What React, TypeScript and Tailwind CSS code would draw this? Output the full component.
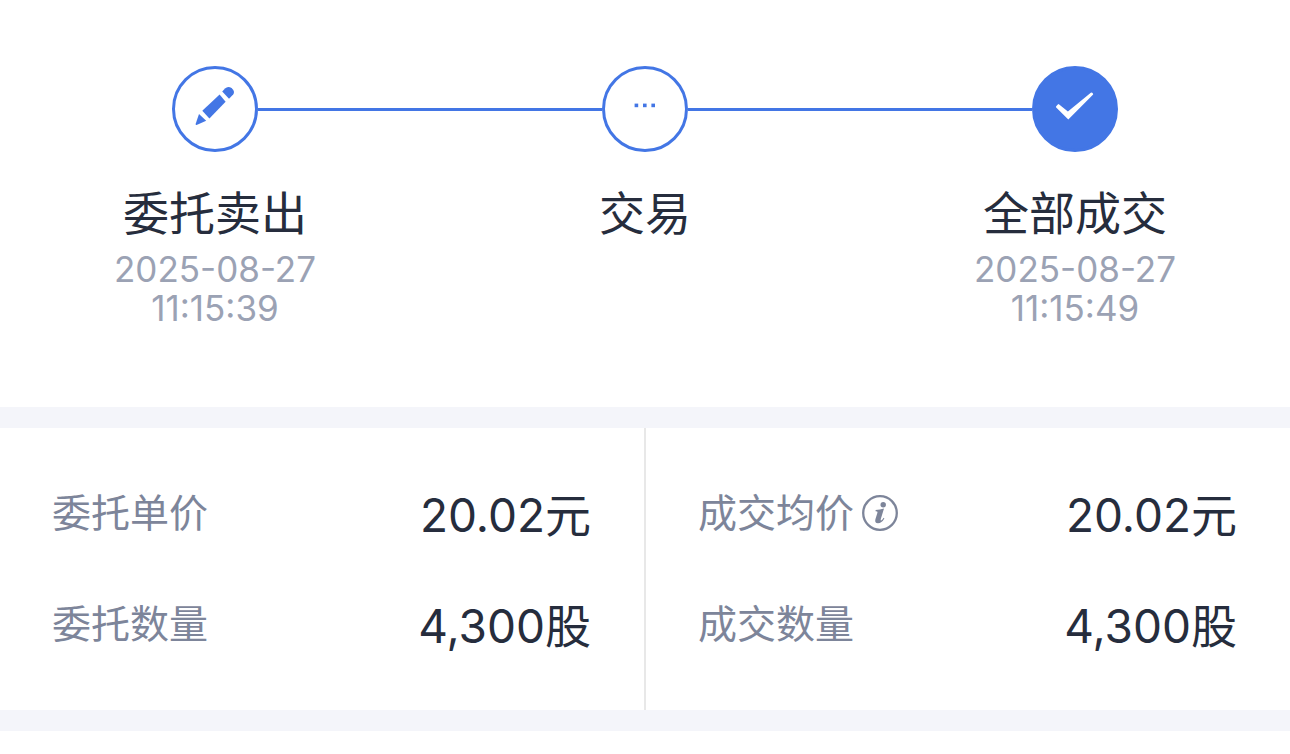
import type { ReactNode } from "react"

type Step = {
  title: string
  date?: string
  time?: string
  icon: ReactNode
}

const PencilIcon = () => (
  <svg viewBox="0 0 86 86" className="w-[86px] h-[86px] shrink-0" fill="currentColor" aria-hidden="true">
    <path d="M27 48 L34.2 54.8 L24.6 59 Q23.4 59.2 23.7 57.8 Z" />
    <path d="M30.3 44.8 L47.6 28.6 L53.6 35.8 L37.4 52.4 Z" />
    <path d="M50.2 25.6 L53 22.4 Q56 19.6 59.6 22 Q63.4 25.4 61.2 28.6 L57 32.8 Z" />
  </svg>
)

const DotsIcon = () => (
  <svg viewBox="0 0 86 86" className="w-[86px] h-[86px] shrink-0" fill="currentColor" aria-hidden="true">
    <rect x="32.6" y="37.6" width="3.6" height="3.6" />
    <rect x="41" y="37.6" width="3.6" height="3.6" />
    <rect x="49.4" y="37.6" width="3.6" height="3.6" />
  </svg>
)

const CheckIcon = () => (
  <svg viewBox="0 0 86 86" className="w-[86px] h-[86px] shrink-0" fill="currentColor" aria-hidden="true">
    <path d="M24.2 41.6 Q23.6 40.8 24.2 40.2 L25.8 38.4 Q26.5 37.8 27.2 38.4 L35.9 45.4 L58.8 26.8 Q59.5 26.2 60.2 26.8 L60.9 27.4 Q61.5 28.1 60.9 28.8 L36.3 53.4 Z" />
  </svg>
)

const InfoIcon = () => (
  <svg viewBox="0 0 36 36" className="w-9 h-9" aria-hidden="true">
    <circle cx="18" cy="18" r="16.8" fill="none" stroke="currentColor" strokeWidth="2.3" />
    <circle cx="21.2" cy="9.8" r="2.7" fill="currentColor" />
    <path
      d="M13.6 15 Q18 14.6 22 13.4 L18.8 24 Q18.4 25.8 19.2 25.4 Q20.4 24.8 21.6 22.8 L22.4 23.4 Q19.6 28.2 16 28.2 Q12.4 28 13.4 24.2 L15.5 17.6 Q15.9 16.2 13.6 16.2 Z"
      fill="currentColor"
    />
  </svg>
)

const steps: Step[] = [
  { title: "委托卖出", date: "2025-08-27", time: "11:15:39", icon: <PencilIcon /> },
  { title: "交易", icon: <DotsIcon /> },
  { title: "全部成交", date: "2025-08-27", time: "11:15:49", icon: <CheckIcon /> },
]

const Progress = () => {
  return (
    <ol className="grid grid-cols-3 pt-[66px] pb-[79px]">
      {steps.map((step, i) => {
        const last = i === steps.length - 1
        return (
          <li key={step.title} className="flex flex-col items-center">
            <div className="w-full flex items-center">
              <span className={i === 0 ? "flex-1" : "flex-1 h-[3px] bg-[#4376e5]"} />
              <span
                className={`w-[86px] h-[86px] rounded-full border-3 border-[#4376e5] flex items-center justify-center ${last ? "bg-[#4376e5] text-white" : "text-[#4376e5]"}`}
              >
                {step.icon}
              </span>
              <span className={last ? "flex-1" : "flex-1 h-[3px] bg-[#4376e5]"} />
            </div>
            <h2 className="mt-[31px] text-[46px] leading-[60px] text-[#262d3d]">{step.title}</h2>
            {step.date && (
              <p className="mt-[7px] text-[35px] leading-[39px] text-[#9ba2b4] text-center">
                {step.date}
                <br />
                {step.time}
              </p>
            )}
          </li>
        )
      })}
    </ol>
  )
}

const Row = ({ label, value, unit, info }: { label: string; value: string; unit: string; info?: boolean }) => (
  <div className="flex items-start justify-between">
    <dt className="flex items-center gap-2 text-[39px] leading-[52px] text-[#7d859a]">
      {label}
      {info && (
        <button type="button" aria-label="成交均价说明">
          <InfoIcon />
        </button>
      )}
    </dt>
    <dd className="text-[46px] leading-[57px] text-[#262d3d]">
      {value}
      <span className="leading-none">{unit}</span>
    </dd>
  </div>
)

const App = () => {
  return (
    <main className="bg-white font-['Inter','Noto_Sans_CJK_SC',sans-serif]">
      <Progress />
      <div className="h-[21px] bg-[#f4f5fa]" />
      <section className="grid grid-cols-[1fr_2px_1fr]">
        <dl className="flex flex-col gap-[54px] pt-[59px] pb-[55px] pl-[52px] pr-[53px]">
          <Row label="委托单价" value="20.02" unit="元" />
          <Row label="委托数量" value="4,300" unit="股" />
        </dl>
        <div className="bg-[#e8e8e8]" />
        <dl className="flex flex-col gap-[54px] pt-[59px] pb-[55px] pl-[52px] pr-[53px]">
          <Row label="成交均价" value="20.02" unit="元" info />
          <Row label="成交数量" value="4,300" unit="股" />
        </dl>
      </section>
      <div className="h-[21px] bg-[#f4f5fa]" />
    </main>
  )
}

export default App
